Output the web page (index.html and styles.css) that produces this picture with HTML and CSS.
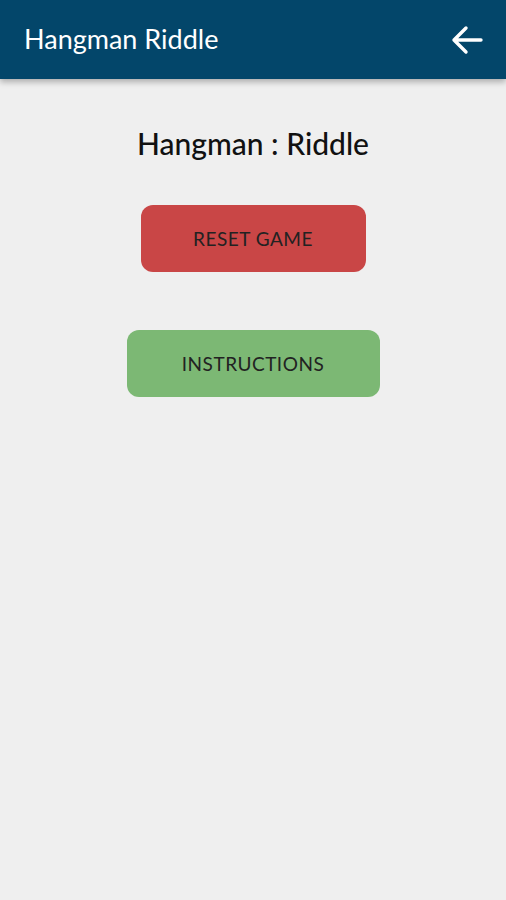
FILE: index.html
```html
<html>
<head>
  <meta charset="UTF-8">
  <meta name="viewport" content="width=device-width, initial-scale=1">
  <title>Hangman Riddle</title>
  <link rel="stylesheet" href="styles.css">
</head>
<body>
  <!-- top app bar -->
  <div class="appbar">
    <span class="appbar-title">Hangman Riddle</span>
    <svg class="back" width="34" height="30" viewBox="0 0 34 30">
      <path d="M31 15 H4 M16 3 L4 15 L16 27" fill="none" stroke="#fff" stroke-width="3.4" stroke-linecap="round" stroke-linejoin="round"/>
    </svg>
  </div>

  <div class="container">
    <h1 class="title">Hangman : Riddle</h1>
    <div class="btn reset">RESET GAME</div>
    <div class="btn instructions">INSTRUCTIONS</div>
  </div>
</body>
</html>
```

FILE: styles.css
```css
body {
  padding: 0;
  margin: 0;
  background: #efefef;
  font-family: 'Lato', 'Noto Sans', sans-serif;
}

.appbar {
  height: 79px;
  background: #03466a;
  display: flex;
  align-items: center;
  justify-content: space-between;
  padding: 0 22px 0 24px;
  box-shadow: 0 3px 6px rgba(0,0,0,0.28);
}

.appbar-title {
  color: #fff;
  font-size: 27px;
  padding-bottom: 2px;
}

.back {
  display: block;
}

.container {
  display: flex;
  flex-direction: column;
  align-items: center;
  padding-top: 46px;
}

.title {
  margin: 0;
  font-size: 30px;
  font-weight: 500;
  color: #111;
  line-height: 36px;
}

.btn {
  height: 67px;
  border-radius: 12px;
  display: flex;
  align-items: center;
  justify-content: center;
  font-size: 19px;
  color: #222;
  letter-spacing: 0.5px;
}

.reset {
  width: 225px;
  margin-top: 44px;
  background: #c94646;
}

.instructions {
  width: 253px;
  margin-top: 58px;
  background: #7cb874;
}
```
